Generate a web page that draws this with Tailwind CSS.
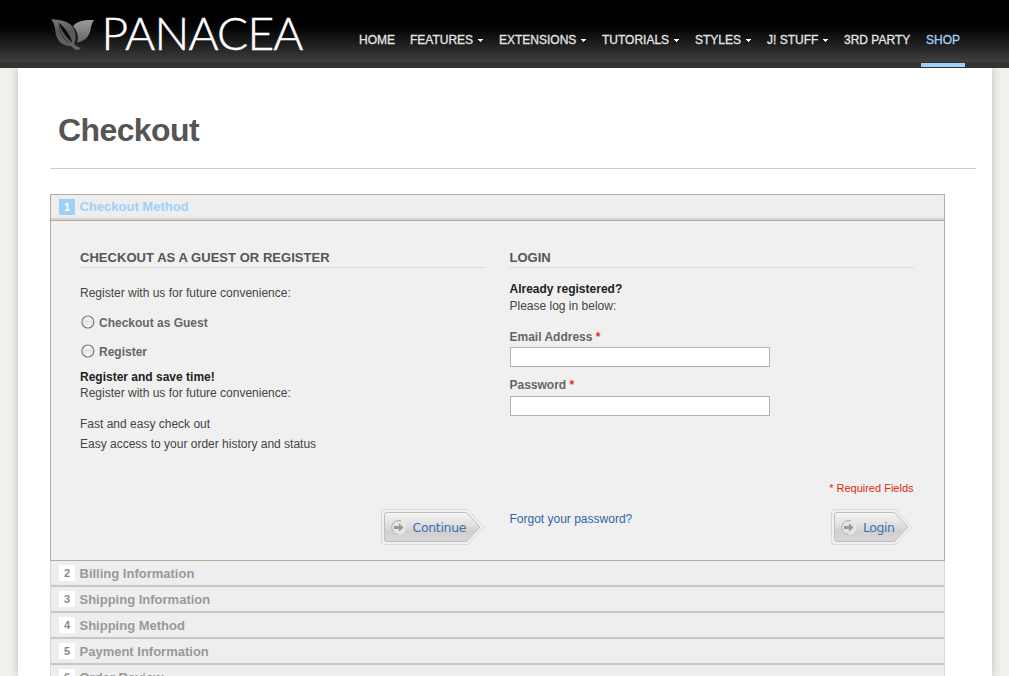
<!DOCTYPE html>
<html lang="en">
<head>
<meta charset="utf-8">
<title>Checkout</title>
<script src="https://cdn.jsdelivr.net/npm/@tailwindcss/browser@4"></script>
</head>
<body class="h-[676px] overflow-hidden bg-[#f1f0ec] font-['Liberation_Sans',Arial,sans-serif] text-[12px] leading-4 text-[#444]">
<header class="relative z-10 flex h-[68px] border-b-[6px] border-[#333] bg-linear-to-b from-black from-20% to-[#404040] pl-[51px]">
  <svg class="h-[62px] w-[308px] shrink-0" viewBox="0 0 308 62" role="img" aria-label="Panacea">
    <defs>
      <linearGradient id="la" x1="0" y1="0" x2="0" y2="1"><stop offset="0" stop-color="#777"/><stop offset=".4" stop-color="#585858"/><stop offset="1" stop-color="#666"/></linearGradient>
      <linearGradient id="lb" x1="0" y1="0" x2="0" y2="1"><stop offset="0" stop-color="#9a9a9a"/><stop offset="1" stop-color="#666"/></linearGradient>
    </defs>
    <path fill="url(#la)" fill-rule="evenodd" d="M0 19C9 20 17 21 21 26C25 31 26 37 23 44C25 46 27 47 30 48L27 50C24 50 22 48 20 46C12 46 7 42 5 35C4 29 4 24 0 19ZM7.500 22.500C10 29 14 37 21.500 43C20 36 14 28 7.500 22.500Z"/>
    <path fill="none" stroke="#282828" stroke-width=".8" d="M8 25C9 33 12 39 18 43"/>
    <path fill="url(#lb)" d="M43 20C36 20 27 20 22 26C26 31 28 36 26 42.500C35 41 38 36 39.500 30C40 26 41 23 43 20Z"/>
    <text x="50.500" y="50" fill="#fff" stroke="#fff" stroke-width=".5" font-family="Lato" font-weight="300" font-size="46" textLength="202" lengthAdjust="spacing">PANACEA</text>
  </svg>
  <nav class="flex h-[68px] pt-[32px] text-[#e4e4e4] [-webkit-text-stroke:0.3px]">
    <a class="w-[51px]">HOME</a>
    <a class="flex w-[89px] gap-[5px]">FEATURES<svg class="mt-[7px] h-[3px] w-[5px]" viewBox="0 0 5 3"><path fill="#fff" d="M0 0h5v1H4v1H3v1H2V2H1V1H0z"/></svg></a>
    <a class="flex w-[103px] gap-[5px]">EXTENSIONS<svg class="mt-[7px] h-[3px] w-[5px]" viewBox="0 0 5 3"><path fill="#fff" d="M0 0h5v1H4v1H3v1H2V2H1V1H0z"/></svg></a>
    <a class="flex w-[93px] gap-[5px]">TUTORIALS<svg class="mt-[7px] h-[3px] w-[5px]" viewBox="0 0 5 3"><path fill="#fff" d="M0 0h5v1H4v1H3v1H2V2H1V1H0z"/></svg></a>
    <a class="flex w-[72px] gap-[5px]">STYLES<svg class="mt-[7px] h-[3px] w-[5px]" viewBox="0 0 5 3"><path fill="#fff" d="M0 0h5v1H4v1H3v1H2V2H1V1H0z"/></svg></a>
    <a class="flex w-[77px] gap-[5px]">J! STUFF<svg class="mt-[7px] h-[3px] w-[5px]" viewBox="0 0 5 3"><path fill="#fff" d="M0 0h5v1H4v1H3v1H2V2H1V1H0z"/></svg></a>
    <a class="w-[77px]">3RD PARTY</a>
    <a class="h-[35px] w-[44px] border-b-4 border-[#a0d0f8] pl-[5px] text-[#a0d0f8]">SHOP</a>
  </nav>
</header>
<main class="ml-[18px] h-[608px] w-[974px] bg-white pl-8 shadow-[0_0_9px_#bdbdb2]">
  <h1 class="h-[101px] w-[926px] border-b border-[#ccc] pt-[42px] pl-2 text-[32px] leading-10 font-bold tracking-[-0.6px] text-[#555]">Checkout</h1>
  <section class="mt-[25px] w-[895px] border border-[#b9aa9b] bg-[#f0f0f0]">
    <h2 class="flex h-[26px] items-start gap-[4.500px] border-b border-[#b9aa9b] bg-[#eee] pt-1 pl-2 text-[13px] font-bold text-[#a0d0f8] shadow-[inset_0_-2px_1px_#d2d2d2]"><span class="h-4 w-4 bg-[#a0d0f8] text-center text-[11px] text-white">1</span>Checkout Method</h2>
    <div class="flex h-[339px] gap-6 pl-[29px]">
      <div class="w-[405px]">
        <h3 class="mt-7 h-[19px] border-b border-[#ddd] pt-px text-[13px] font-bold tracking-[0.04px] text-[#555]">CHECKOUT AS A GUEST OR REGISTER</h3>
        <p class="mt-[17px]">Register with us for future convenience:</p>
        <label class="mt-[14px] flex h-4 gap-[4px] font-bold text-[#666]"><svg class="h-[15px] w-[15px]" viewBox="0 0 15 15"><defs><linearGradient id="r" x1="0" y1="0" x2="0" y2="1"><stop stop-color="#fff"/><stop offset=".5" stop-color="#e2e2e2"/><stop offset="1" stop-color="#fff"/></linearGradient></defs><circle cx="7.900" cy="7" r="6" fill="url(#r)" stroke="#777" stroke-width="1.1"/></svg>Checkout as Guest</label>
        <label class="mt-[13px] flex h-4 gap-[4px] font-bold text-[#666]"><svg class="h-[15px] w-[15px]" viewBox="0 0 15 15"><circle cx="7.900" cy="7" r="6" fill="url(#r)" stroke="#777" stroke-width="1.1"/></svg>Register</label>
        <p class="mt-[9px] font-bold text-[#222]">Register and save time!</p>
        <p>Register with us for future convenience:</p>
        <p class="mt-[15px]">Fast and easy check out</p>
        <p class="mt-1">Easy access to your order history and status</p>
        <svg class="mt-[57px] ml-[301px] h-[36px] w-[105px]" viewBox="0 0 105 36">
          <defs><linearGradient id="b" x1="0" y1="0" x2="0" y2="1"><stop stop-color="#f6f6f6"/><stop offset=".5" stop-color="#dcdcdc"/><stop offset=".65" stop-color="#d0d0d0"/><stop offset="1" stop-color="#d8d8d8"/></linearGradient></defs>
          <path d="M3.500.5H86.500L103 18L86.500 35.500H3.500Q.5 35.500.5 32.500V3.500Q.5.5 3.500.5Z" fill="#f0f0f0" stroke="#d9d9d9"/>
          <path d="M5.500 3.500H85.500L99 18L85.500 32.500H5.500Q3.500 32.500 3.500 30.500V5.500Q3.500 3.500 5.500 3.500Z" fill="url(#b)" stroke="#bfbfbf"/>
          <circle cx="17.500" cy="18.500" r="7" fill="#e4e4e4" stroke="#eee"/><path d="M20 11.900A7 7 0 1 0 17.500 25.500" fill="none" stroke="#aaa"/>
          <path d="M13 17h5v-2.500l4.500 4l-4.500 4v-2.500h-5z" fill="#999"/>
          <text x="31.500" y="22.500" font-family="DejaVu Sans" font-size="12.500" fill="#3b72b0" textLength="54">Continue</text>
        </svg>
      </div>
      <div class="w-[405px]">
        <h3 class="mt-7 h-[19px] border-b border-[#ddd] pt-px pl-[0.500px] text-[13px] font-bold text-[#555]">LOGIN</h3>
        <p class="mt-[13px] pl-[0.500px] font-bold text-[#222]">Already registered?</p>
        <p class="mt-px pl-[0.500px]">Please log in below:</p>
        <label class="mt-[15px] block pl-[0.500px] font-bold text-[#666]">Email Address <span class="text-[#e03020]">*</span></label>
        <input class="mt-[2px] ml-[1px] block h-5 w-[260px] border border-[#b2b2b2] bg-white" aria-label="Email Address">
        <label class="mt-[10px] block pl-[0.500px] font-bold text-[#666]">Password <span class="text-[#e03020]">*</span></label>
        <input type="password" class="mt-[3px] ml-[1px] block h-5 w-[260px] border border-[#b2b2b2] bg-white" aria-label="Password">
        <p class="mt-[64px] pr-[0.500px] text-right text-[11px] text-[#df280a]">* Required Fields</p>
        <div class="mt-[13px] flex justify-between">
          <a class="mt-[2px] pl-[0.500px] text-[#2f65a8]">Forgot your password?</a>
          <svg class="h-[36px] w-[83px]" viewBox="0 0 83 36">
            <path d="M3.500.5H64.500L81 18L64.500 35.500H3.500Q.5 35.500.5 32.500V3.500Q.5.5 3.500.5Z" fill="#f0f0f0" stroke="#d9d9d9"/>
            <path d="M5.500 3.500H63.500L77 18L63.500 32.500H5.500Q3.500 32.500 3.500 30.500V5.500Q3.500 3.500 5.500 3.500Z" fill="url(#b)" stroke="#bfbfbf"/>
            <circle cx="17.500" cy="18.500" r="7" fill="#e4e4e4" stroke="#eee"/><path d="M20 11.900A7 7 0 1 0 17.500 25.500" fill="none" stroke="#aaa"/>
            <path d="M13 17h5v-2.500l4.500 4l-4.500 4v-2.500h-5z" fill="#999"/>
            <text x="32" y="22.500" font-family="DejaVu Sans" font-size="12.500" fill="#3b72b0" textLength="32">Login</text>
          </svg>
        </div>
      </div>
    </div>
  </section>
  <ol class="w-[895px] border-x border-[#d8d8e2] bg-[#eee] text-[13px] font-bold text-[#999]">
    <li class="flex h-[26px] gap-[4.500px] pt-1 pl-2 leading-[18px] shadow-[inset_0_-2px_1px_#c6c6c6]"><span class="h-4 w-4 bg-white text-center text-[11px] leading-4 text-[#888]">2</span>Billing Information</li>
    <li class="flex h-[26px] gap-[4.500px] pt-1 pl-2 leading-[18px] shadow-[inset_0_-2px_1px_#c6c6c6]"><span class="h-4 w-4 bg-white text-center text-[11px] leading-4 text-[#888]">3</span>Shipping Information</li>
    <li class="flex h-[26px] gap-[4.500px] pt-1 pl-2 leading-[18px] shadow-[inset_0_-2px_1px_#c6c6c6]"><span class="h-4 w-4 bg-white text-center text-[11px] leading-4 text-[#888]">4</span>Shipping Method</li>
    <li class="flex h-[26px] gap-[4.500px] pt-1 pl-2 leading-[18px] shadow-[inset_0_-2px_1px_#c6c6c6]"><span class="h-4 w-4 bg-white text-center text-[11px] leading-4 text-[#888]">5</span>Payment Information</li>
    <li class="flex h-[26px] gap-[4.500px] pt-1 pl-2 leading-[18px]"><span class="h-4 w-4 bg-white text-center text-[11px] leading-4 text-[#888]">6</span>Order Review</li>
  </ol>
</main>
</body>
</html>
